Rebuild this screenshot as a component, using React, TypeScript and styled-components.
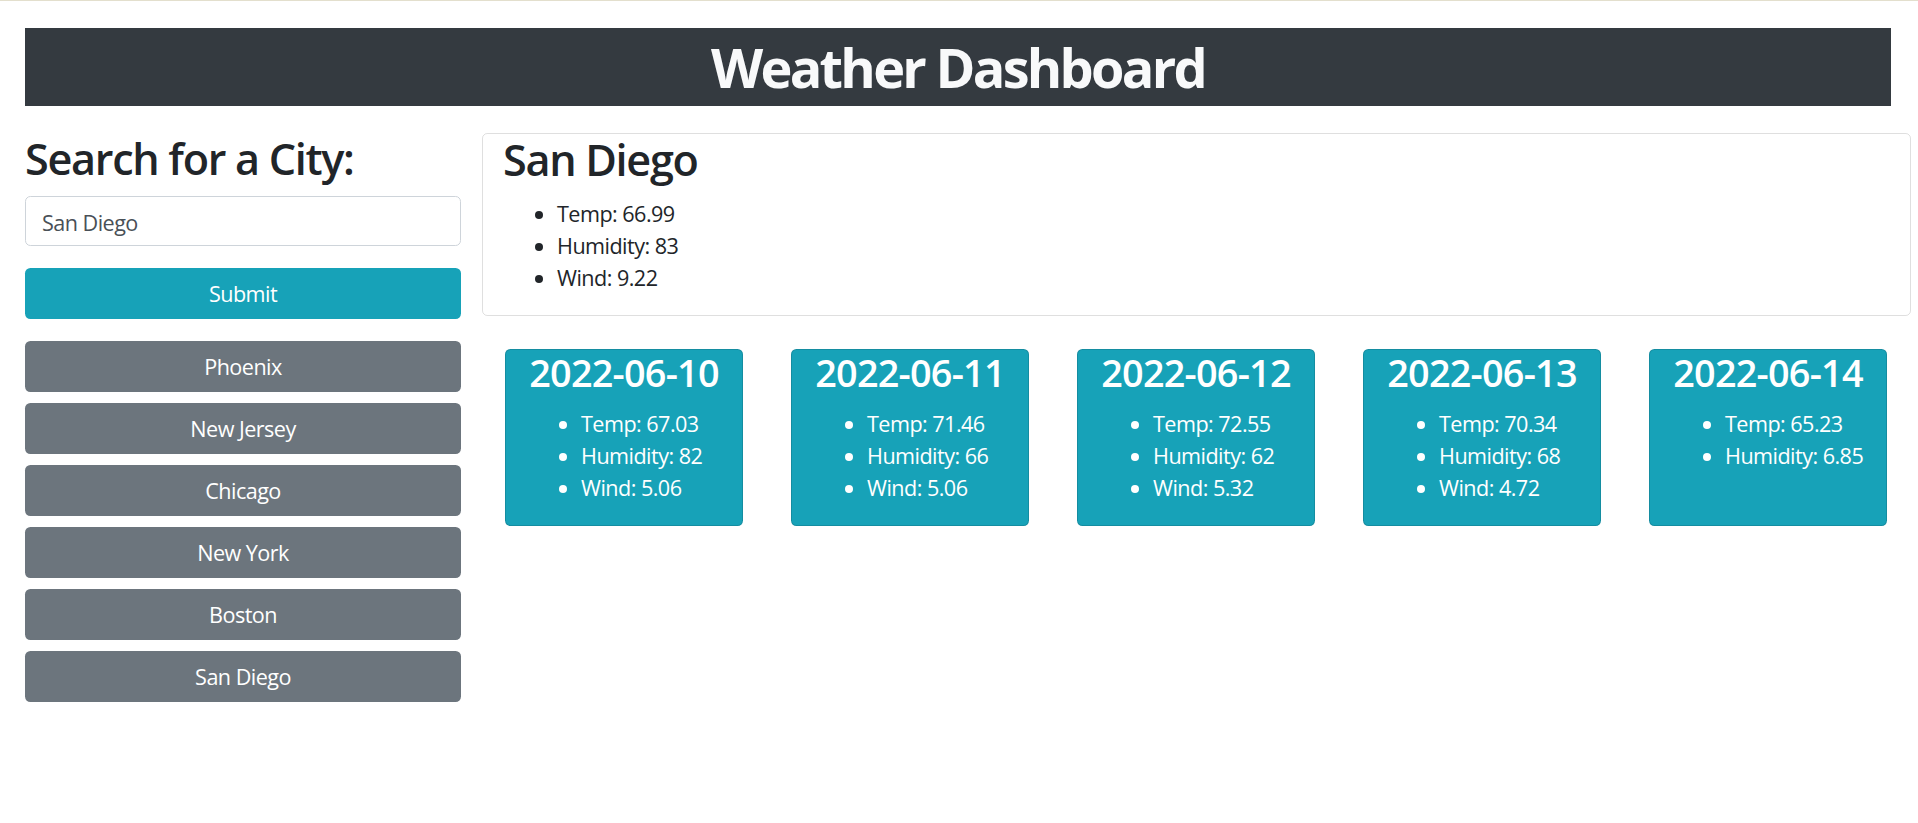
import React from "react";
import styled, { createGlobalStyle } from "styled-components";

const GlobalStyle = createGlobalStyle`
  * { box-sizing: border-box; }
  html, body { margin: 0; padding: 0; background: #ffffff; }
  body {
    font-family: "Open Sans", "Noto Sans", "Liberation Sans", sans-serif;
    font-size: 21.6px;
    line-height: 1.5;
    letter-spacing: -0.025em;
    color: #212529;
    border-top: 1px solid #e3dfcd;
  }
`;

const Page = styled.div`
  padding: 27px 7px 0 25px;
`;

const Header = styled.header`
  height: 78px;
  margin: 0 20px 27px 0;
  background-color: #343a40;
  display: flex;
  align-items: center;
  justify-content: center;
`;

const Title = styled.h1`
  margin: 0;
  font-size: 54px;
  font-weight: 700;
  line-height: 1.2;
  letter-spacing: -0.05em;
  color: #f8f9fa;
`;

const Main = styled.main`
  display: flex;
  align-items: flex-start;
  gap: 21px;
`;

const Sidebar = styled.aside`
  width: 436px;
  flex-shrink: 0;
  display: flex;
  flex-direction: column;
`;

const Heading = styled.h2`
  margin: 0 0 10.8px;
  font-size: 43.2px;
  font-weight: 600;
  line-height: 1.2;
  letter-spacing: -0.03em;
`;

const SearchInput = styled.input`
  height: 50px;
  margin-bottom: 22px;
  padding: 3px 16px 0;
  border: 1px solid #ced4da;
  border-radius: 5.4px;
  font-family: inherit;
  font-size: 21.6px;
  letter-spacing: inherit;
  color: #495057;
  outline: none;
`;

const Button = styled.button<{ $variant: "info" | "secondary" }>`
  height: 51px;
  width: 100%;
  padding-top: 2px;
  border: none;
  border-radius: 5.4px;
  font-family: inherit;
  font-size: 21.6px;
  letter-spacing: inherit;
  color: #ffffff;
  cursor: pointer;
  background-color: ${(p) => (p.$variant === "info" ? "#17a2b8" : "#6c757d")};
`;

const SubmitButton = styled(Button)`
  margin-bottom: 22px;
`;

const CityList = styled.div`
  display: flex;
  flex-direction: column;
  gap: 11px;
`;

const Content = styled.section`
  flex: 1;
  display: flex;
  flex-direction: column;
`;

const CurrentCard = styled.div`
  border: 1px solid rgba(0, 0, 0, 0.125);
  border-radius: 5.4px;
  padding: 0 20px;
`;

const StatList = styled.ul`
  margin: 0 0 21.6px;
  padding-left: 54px;

  li {
    padding-top: 1px;
    margin-bottom: -1px;
  }
`;

const ForecastRow = styled.div`
  display: flex;
  gap: 48px;
  margin-top: 33px;
  padding: 0 24px 0 23px;
`;

const ForecastCard = styled.div`
  flex: 1 1 0;
  background-color: #17a2b8;
  color: #ffffff;
  border: 1px solid rgba(0, 0, 0, 0.125);
  border-radius: 5.4px;
  padding: 0 21px;
`;

const DateTitle = styled.h3`
  margin: 0 -10px 10.8px;
  font-size: 37.8px;
  font-weight: 600;
  line-height: 1.2;
  letter-spacing: -0.02em;
  text-align: center;
  white-space: nowrap;
`;

type Day = { date: string; stats: string[] };

const cities = ["Phoenix", "New Jersey", "Chicago", "New York", "Boston", "San Diego"];

const forecast: Day[] = [
  { date: "2022-06-10", stats: ["Temp: 67.03", "Humidity: 82", "Wind: 5.06"] },
  { date: "2022-06-11", stats: ["Temp: 71.46", "Humidity: 66", "Wind: 5.06"] },
  { date: "2022-06-12", stats: ["Temp: 72.55", "Humidity: 62", "Wind: 5.32"] },
  { date: "2022-06-13", stats: ["Temp: 70.34", "Humidity: 68", "Wind: 4.72"] },
  { date: "2022-06-14", stats: ["Temp: 65.23", "Humidity: 6.85"] },
];

export default function App() {
  return (
    <>
      <GlobalStyle />
      <Page>
        <Header>
          <Title>Weather Dashboard</Title>
        </Header>
        <Main>
          <Sidebar>
            <Heading>Search for a City:</Heading>
            <SearchInput defaultValue="San Diego" />
            <SubmitButton $variant="info">Submit</SubmitButton>
            <CityList>
              {cities.map((city) => (
                <Button key={city} $variant="secondary">
                  {city}
                </Button>
              ))}
            </CityList>
          </Sidebar>
          <Content>
            <CurrentCard>
              <Heading>San Diego</Heading>
              <StatList>
                <li>Temp: 66.99</li>
                <li>Humidity: 83</li>
                <li>Wind: 9.22</li>
              </StatList>
            </CurrentCard>
            <ForecastRow>
              {forecast.map((day) => (
                <ForecastCard key={day.date}>
                  <DateTitle>{day.date}</DateTitle>
                  <StatList>
                    {day.stats.map((s) => (
                      <li key={s}>{s}</li>
                    ))}
                  </StatList>
                </ForecastCard>
              ))}
            </ForecastRow>
          </Content>
        </Main>
      </Page>
    </>
  );
}
